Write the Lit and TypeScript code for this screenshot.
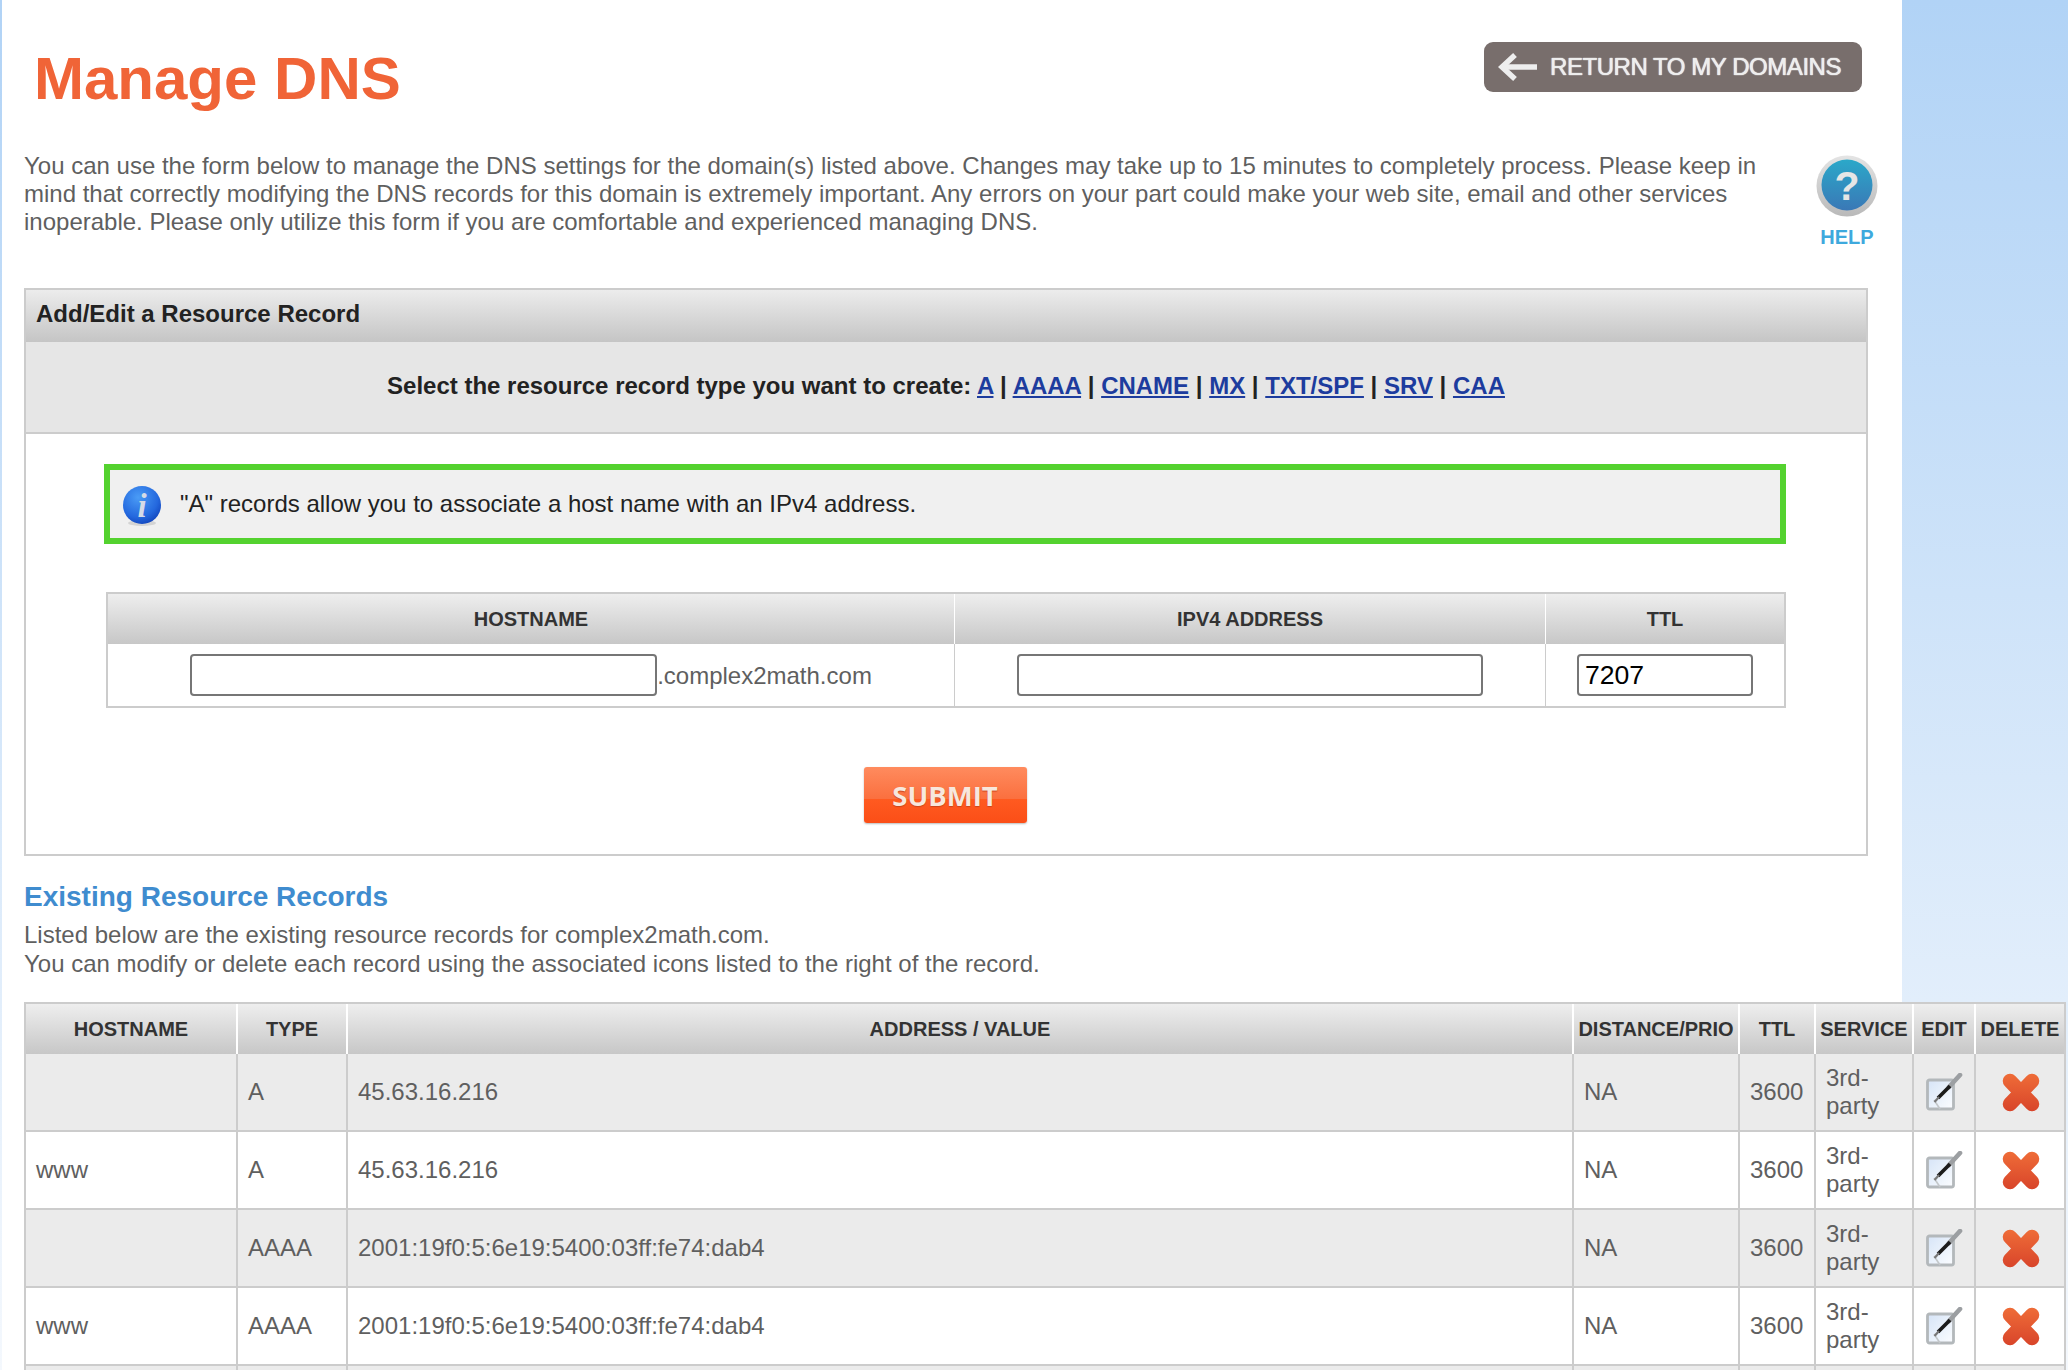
import { LitElement, html, css, svg } from "lit";
import { customElement, state } from "lit/decorators.js";

interface DnsRecord {
  host: string;
  type: string;
  value: string;
}

const editIcon = html`<svg class="row-icon" width="38" height="38" viewBox="0 0 38 38">
  <defs>
    <linearGradient id="sheet" x1="0" y1="0" x2="1" y2="1">
      <stop offset="0" stop-color="#d6e4f7"></stop>
      <stop offset="1" stop-color="#fbfdff"></stop>
    </linearGradient>
  </defs>
  <rect x="2.5" y="7" width="26" height="29" rx="2" fill="url(#sheet)" stroke="#b3b8bb" stroke-width="2.8"></rect>
  <path d="M9 27l6 9" stroke="#c3c7ca" stroke-width="1.6" fill="none"></path>
  <path d="M35 2L24 14" stroke="#9c9fa2" stroke-width="4.6" stroke-linecap="round"></path>
  <path d="M25 13L13 25" stroke="#1c1c1c" stroke-width="3.8"></path>
  <path d="M14 24L9.5 29" stroke="#777" stroke-width="2.2"></path>
</svg>`;

const deleteIcon = html`<svg class="row-icon" width="38" height="39" viewBox="0 0 38 39">
  <defs>
    <linearGradient id="cross" gradientUnits="userSpaceOnUse" x1="0" y1="0" x2="0" y2="39">
      <stop offset="0" stop-color="#ef6d38"></stop>
      <stop offset="1" stop-color="#d8442a"></stop>
    </linearGradient>
  </defs>
  <path d="M8 8L30 31M30 8L8 31" stroke="url(#cross)" stroke-width="14.5" stroke-linecap="round" fill="none"></path>
</svg>`;

const helpIcon = svg`<svg width="62" height="62" viewBox="0 0 62 62">
  <defs>
    <linearGradient id="help-ring" x1="0" y1="0" x2="0" y2="1">
      <stop offset="0" stop-color="#e4e4e4"></stop>
      <stop offset="1" stop-color="#b9b9b9"></stop>
    </linearGradient>
    <linearGradient id="help-fill" x1="0" y1="0" x2="0" y2="1">
      <stop offset="0" stop-color="#2ba8c9"></stop>
      <stop offset="1" stop-color="#3a78b6"></stop>
    </linearGradient>
  </defs>
  <circle cx="31" cy="31" r="30.5" fill="url(#help-ring)"></circle>
  <circle cx="31" cy="30" r="25.5" fill="url(#help-fill)"></circle>
  <text x="31" y="45" text-anchor="middle" font-family="Liberation Sans" font-weight="700" font-size="41" fill="#e6e6e6">?</text>
</svg>`;

const infoIcon = svg`<svg width="40" height="40" viewBox="0 0 40 40">
  <defs>
    <radialGradient id="info-fill" cx="0.4" cy="0.3" r="0.8">
      <stop offset="0" stop-color="#4a9cf6"></stop>
      <stop offset="0.65" stop-color="#2468de"></stop>
      <stop offset="1" stop-color="#0d3cb4"></stop>
    </radialGradient>
  </defs>
  <ellipse cx="20" cy="37" rx="14" ry="3" fill="#d4d4d4"></ellipse>
  <circle cx="20" cy="19" r="19" fill="url(#info-fill)"></circle>
  <text x="20" y="31" text-anchor="middle" font-family="Liberation Serif" font-style="italic" font-weight="700" font-size="33" fill="#d5dbe6">i</text>
</svg>`;

@customElement("app-root")
export class AppRoot extends LitElement {
  static styles = css`
    :host {
      display: block;
      width: 2068px;
      height: 1370px;
      overflow: hidden;
      background: linear-gradient(#b1d3f6 0, #f4f8fd 1370px);
      font-family: "Liberation Sans", Arial, sans-serif;
      color: #5f5f5f;
    }
    .panel {
      margin-left: 2px;
      width: 1900px;
      height: 1370px;
      box-sizing: border-box;
      padding-left: 22px;
      background: #fff;
    }
    .top {
      display: flex;
      justify-content: space-between;
      height: 152px;
      width: 1838px;
    }
    h1 {
      margin: 49px 0 0 10px;
      font-size: 60px;
      line-height: 60px;
      font-weight: 700;
      color: #f06437;
    }
    .back {
      display: flex;
      align-items: center;
      box-sizing: border-box;
      width: 378px;
      height: 50px;
      margin-top: 42px;
      padding-left: 14px;
      gap: 12px;
      border-radius: 9px;
      background: #786e6c;
      color: #eeeeee;
      font-size: 24px;
      letter-spacing: -0.45px;
      text-shadow: 0 0 1px #eee, 0 0 1px #eee;
      white-space: nowrap;
    }
    .intro {
      display: flex;
      justify-content: space-between;
      width: 1854px;
      height: 136px;
    }
    .intro p {
      width: 1745px;
      margin: 0;
      font-size: 24px;
      line-height: 28px;
    }
    .help {
      display: flex;
      flex-direction: column;
      align-items: center;
      width: 62px;
      padding-top: 3px;
      color: #3ea9dd;
      font-size: 20px;
      font-weight: 700;
      line-height: 24px;
    }
    .help svg {
      display: block;
      margin-bottom: 8px;
    }
    .card {
      box-sizing: border-box;
      width: 1844px;
      height: 568px;
      border: 2px solid #cccccc;
    }
    .card-head {
      box-sizing: border-box;
      height: 52px;
      padding-left: 10px;
      background: linear-gradient(#ececec, #c5c5c5);
      color: #222;
      font-size: 24px;
      font-weight: 700;
      line-height: 48px;
    }
    .types {
      box-sizing: border-box;
      height: 92px;
      border-bottom: 2px solid #cccccc;
      background: #e6e6e6;
      color: #222;
      font-size: 24px;
      font-weight: 700;
      line-height: 87px;
      text-align: center;
    }
    .types a {
      color: #1d3c9e;
      text-decoration: underline;
    }
    .note {
      display: flex;
      align-items: center;
      box-sizing: border-box;
      width: 1682px;
      height: 80px;
      margin: 30px 0 0 78px;
      padding-left: 12px;
      gap: 18px;
      border: 6px solid #54d22f;
      background: #f0f0f0;
      color: #222;
      font-size: 24px;
    }
    .note svg {
      flex: none;
      margin-top: 3px;
    }
    table {
      border-collapse: separate;
      border-spacing: 0;
      table-layout: fixed;
    }
    th {
      padding: 0;
      background: linear-gradient(#eeeeee, #c7c7c7);
      color: #333;
      font-size: 20px;
      font-weight: 700;
      text-align: center;
      white-space: nowrap;
    }
    .form-table {
      width: 1680px;
      margin: 48px 0 0 80px;
      border: 2px solid #cccccc;
    }
    .form-table th {
      height: 50px;
      border-left: 1px solid #fff;
    }
    .form-table td {
      box-sizing: border-box;
      height: 62px;
      padding: 10px 0 0;
      border-left: 1px solid #cccccc;
      font-size: 24px;
      text-align: center;
      vertical-align: top;
      white-space: nowrap;
    }
    .form-table tr > :first-child {
      border-left: 0;
    }
    input {
      box-sizing: border-box;
      height: 42px;
      margin: 0;
      padding: 0 6px;
      border: 2px solid #767676;
      border-radius: 4px;
      background: #fff;
      color: #000;
      font-family: "Liberation Sans", Arial, sans-serif;
      font-size: 26.6px;
      vertical-align: top;
    }
    .suffix {
      line-height: 44px;
    }
    .submit-row {
      display: flex;
      justify-content: center;
      padding: 59px 2px 0 0;
    }
    .submit {
      box-sizing: border-box;
      width: 163px;
      height: 56px;
      padding: 0;
      border: 0;
      border-radius: 3px;
      background: linear-gradient(#ff8b5e 0, #fb6f3e 58%, #ff5a20 58%, #fb4e17 100%);
      box-shadow: 0 1px 2px #bbb;
      color: #f7e7dd;
      font-family: "Open Sans", sans-serif;
      font-size: 27.5px;
      font-weight: 700;
      text-shadow: 0 1px 1px #c9451c;
    }
    h2 {
      margin: 24px 0 0;
      color: #3f8ccf;
      font-size: 28px;
      font-weight: 700;
      line-height: 34px;
    }
    .lead {
      margin: 7px 0 0;
      font-size: 24px;
      line-height: 28.5px;
    }
    .records {
      width: 2042px;
      margin-top: 24px;
      border: 2px solid #cccccc;
      border-bottom: 0;
    }
    .records th {
      height: 50px;
      border-left: 2px solid #fff;
    }
    .records td {
      box-sizing: border-box;
      height: 78px;
      padding: 0 0 0 10px;
      border-left: 2px solid #cccccc;
      border-bottom: 2px solid #cccccc;
      background: #fff;
      font-size: 24px;
      line-height: 28px;
    }
    .records tr > :first-child {
      border-left: 0;
    }
    .records tbody tr:nth-child(odd) td {
      background: #ebebeb;
    }
    .records td.icon {
      padding: 0;
      text-align: center;
    }
    .records td.icon.delete {
      padding-left: 2px;
    }
    .row-icon {
      display: block;
      margin: 0 auto;
      filter: blur(0.4px);
    }
  `;

  @state() records: DnsRecord[] = [
    { host: "", type: "A", value: "45.63.16.216" },
    { host: "www", type: "A", value: "45.63.16.216" },
    { host: "", type: "AAAA", value: "2001:19f0:5:6e19:5400:03ff:fe74:dab4" },
    { host: "www", type: "AAAA", value: "2001:19f0:5:6e19:5400:03ff:fe74:dab4" },
  ];

  private recordTypes = ["A", "AAAA", "CNAME", "MX", "TXT/SPF", "SRV", "CAA"];

  render() {
    return html`
      <div class="panel">
        <div class="top">
          <h1>Manage DNS</h1>
          <div class="back">
            <svg width="40" height="30" viewBox="0 0 40 30" fill="none" stroke="#eeeeee" stroke-width="5.5">
              <path d="M4 15H39"></path>
              <path d="M17 3L4 15L17 27"></path>
            </svg>
            <span>RETURN TO MY DOMAINS</span>
          </div>
        </div>
        <div class="intro">
          <p>You can use the form below to manage the DNS settings for the domain(s) listed above. Changes may take up to 15 minutes to completely process. Please keep in mind that correctly modifying the DNS records for this domain is extremely important. Any errors on your part could make your web site, email and other services inoperable. Please only utilize this form if you are comfortable and experienced managing DNS.</p>
          <div class="help">${helpIcon}<span>HELP</span></div>
        </div>
        <div class="card">
          <div class="card-head">Add/Edit a Resource Record</div>
          <div class="types">
            Select the resource record type you want to create:
            ${this.recordTypes.map(
              (t, i) => html`${i ? " | " : ""}<a href="#">${t}</a>`
            )}
          </div>
          <div class="note">${infoIcon}<span>"A" records allow you to associate a host name with an IPv4 address.</span></div>
          <table class="form-table">
            <colgroup>
              <col style="width: 846px" />
              <col style="width: 591px" />
              <col style="width: 239px" />
            </colgroup>
            <thead>
              <tr><th>HOSTNAME</th><th>IPV4 ADDRESS</th><th>TTL</th></tr>
            </thead>
            <tbody>
              <tr>
                <td><input style="width: 467px" /><span class="suffix">.complex2math.com</span></td>
                <td><input style="width: 466px" /></td>
                <td><input style="width: 176px" .value=${"7207"} /></td>
              </tr>
            </tbody>
          </table>
          <div class="submit-row"><button class="submit">SUBMIT</button></div>
        </div>
        <h2>Existing Resource Records</h2>
        <p class="lead">
          Listed below are the existing resource records for complex2math.com.<br />
          You can modify or delete each record using the associated icons listed to the right of the record.
        </p>
        <table class="records">
          <colgroup>
            ${[210, 110, 1226, 166, 76, 98, 62, 90].map((w) => html`<col style="width: ${w}px" />`)}
          </colgroup>
          <thead>
            <tr>
              <th>HOSTNAME</th>
              <th>TYPE</th>
              <th>ADDRESS / VALUE</th>
              <th>DISTANCE/PRIO</th>
              <th>TTL</th>
              <th>SERVICE</th>
              <th>EDIT</th>
              <th>DELETE</th>
            </tr>
          </thead>
          <tbody>
            ${this.records.map(
              (r) => html`<tr>
                <td>${r.host}</td>
                <td>${r.type}</td>
                <td>${r.value}</td>
                <td>NA</td>
                <td>3600</td>
                <td>3rd-<br />party</td>
                <td class="icon">${editIcon}</td>
                <td class="icon delete">${deleteIcon}</td>
              </tr>`
            )}
            <tr><td></td><td></td><td></td><td></td><td></td><td></td><td></td><td></td></tr>
          </tbody>
        </table>
      </div>
    `;
  }
}
